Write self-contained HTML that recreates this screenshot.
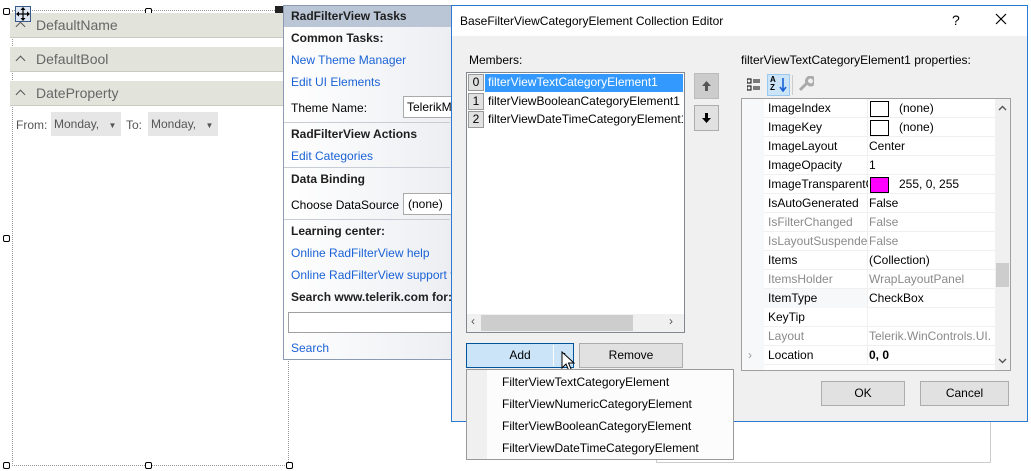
<!DOCTYPE html>
<html><head><meta charset="utf-8"><style>
*{box-sizing:border-box;margin:0;padding:0}
body{width:1031px;height:471px;overflow:hidden;background:#fff;font-family:"Liberation Sans",sans-serif;font-size:12px;color:#000;position:relative}
.a{position:absolute;white-space:nowrap}
.grp{position:absolute;left:10px;width:274px;height:25px;background:#e2e4dc;border-bottom:1px solid #c8cbc0;color:#666;font-size:14px;line-height:25px;padding-left:26px}
.grp:before{content:"";position:absolute;left:7px;top:10px;width:6px;height:6px;border-left:1.5px solid #555;border-top:1.5px solid #555;transform:rotate(45deg)}
.h{position:absolute;width:7px;height:7px;border:1px solid #000;background:#fff;border-radius:2px}
.lnk{color:#1a62d6}
.b{font-weight:bold;color:#1e1e1e}
.sep{position:absolute;left:284px;width:166px;border-top:1px solid #c8ccd4}
.row{position:absolute;left:764px;width:231px;height:19px;border-bottom:1px solid #f0f0f0;line-height:19px}
.row span{position:absolute}
.row .n{left:4px}.row .v{left:105px}
.row .c{position:absolute;left:0;width:104px;height:19px;border-right:1px solid #f0f0f0}
.g{color:#8a8a8a}
.btn{position:absolute;background:#e1e1e1;border:1px solid #adadad;text-align:center;line-height:23px}
.mi{position:absolute;left:502px}
</style></head><body>
<!-- designer -->
<div class="a" style="left:12px;top:10px;width:277px;height:456px;border:1px dotted #999"></div>
<div class="h" style="left:3px;top:8px"></div><div class="h" style="left:145px;top:8px"></div>
<div class="h" style="left:3px;top:235px"></div>
<div class="h" style="left:3px;top:462px"></div><div class="h" style="left:145px;top:462px"></div><div class="h" style="left:286px;top:462px"></div>
<div class="a" style="left:275px;top:6px;width:8px;height:8px;background:#222"></div>
<div class="grp" style="top:13px">DefaultName</div>
<div class="grp" style="top:47px">DefaultBool</div>
<div class="grp" style="top:81px">DateProperty</div>
<svg class="a" style="left:15px;top:6px" width="16" height="16" viewBox="0 0 16 16"><rect x="0.5" y="0.5" width="15" height="15" fill="#dde6f2" stroke="#3a5a8a"/><path d="M8 2V14M2 8H14" stroke="#000" stroke-width="1.2"/><path d="M8 1L5.5 4H10.5ZM8 15L5.5 12H10.5ZM1 8L4 5.5V10.5ZM15 8L12 5.5V10.5Z" fill="#000"/></svg>
<div class="a" style="left:16px;top:118px;color:#555;font-size:12px">From:</div>
<div class="a" style="left:51px;top:112px;width:70px;height:24px;background:#e6e6e6;color:#555;line-height:24px;padding-left:3px">Monday, <span style="font-size:8px;margin-left:6px">▼</span></div>
<div class="a" style="left:126px;top:118px;color:#555">To:</div>
<div class="a" style="left:148px;top:112px;width:70px;height:24px;background:#e6e6e6;color:#555;line-height:24px;padding-left:3px">Monday, <span style="font-size:8px;margin-left:6px">▼</span></div>
<!-- tasks panel -->
<div class="a" style="left:283px;top:5px;width:170px;height:355px;border:1px solid #8a9ab0;background:linear-gradient(90deg,#fff,#eceef2)"></div>
<div class="a b" style="left:284px;top:6px;width:167px;height:21px;background:#bac6d6;padding-left:7px;line-height:21px">RadFilterView Tasks</div>
<div class="a b" style="left:291px;top:31px">Common Tasks:</div>
<div class="a lnk" style="left:291px;top:53px">New Theme Manager</div>
<div class="a lnk" style="left:291px;top:75px">Edit UI Elements</div>
<div class="a" style="left:291px;top:101px">Theme Name:</div>
<div class="a" style="left:403px;top:96px;width:50px;height:22px;border:1px solid #aaa;background:#fff;padding:3px 3px">TelerikM</div>
<div class="sep" style="top:122px"></div>
<div class="a b" style="left:291px;top:127px">RadFilterView Actions</div>
<div class="a lnk" style="left:291px;top:149px">Edit Categories</div>
<div class="sep" style="top:167px"></div>
<div class="a b" style="left:291px;top:172px">Data Binding</div>
<div class="a" style="left:291px;top:198px">Choose DataSource</div>
<div class="a" style="left:403px;top:193px;width:50px;height:22px;border:1px solid #aaa;background:#fff;padding:3px 4px">(none)</div>
<div class="sep" style="top:219px"></div>
<div class="a b" style="left:291px;top:224px">Learning center:</div>
<div class="a lnk" style="left:291px;top:246px">Online RadFilterView help</div>
<div class="a lnk" style="left:291px;top:268px">Online RadFilterView support f</div>
<div class="a b" style="left:291px;top:290px">Search www.telerik.com for:</div>
<div class="a" style="left:288px;top:312px;width:165px;height:21px;border:1px solid #a0a0a0;background:#fff"></div>
<div class="a lnk" style="left:291px;top:341px">Search</div>
<!-- behind panel -->
<div class="a" style="left:656px;top:420px;width:335px;height:43px;border:1px solid #ccc;border-top:none;background:#fff"></div>
<!-- dialog -->
<div class="a" style="left:451px;top:5px;width:577px;height:417px;border:1px solid #2b79d0;background:#f0f0f0"></div>
<div class="a" style="left:452px;top:6px;width:575px;height:30px;background:#fff"></div>
<div class="a" style="left:460px;top:14px">BaseFilterViewCategoryElement Collection Editor</div>
<div class="a" style="left:952px;top:12px;font-size:14px">?</div>
<svg class="a" style="left:995px;top:13px" width="12" height="12"><path d="M1 1L11 11M11 1L1 11" stroke="#000" stroke-width="1.2"/></svg>
<div class="a" style="left:469px;top:53px">Members:</div>
<div class="a" style="left:466px;top:72px;width:219px;height:261px;border:1px solid #828790;background:#fff"></div>
<div class="a" style="left:468px;top:74px;width:16px;height:17px;background:#e1e1e1;border:1px solid #999;text-align:center;line-height:15px">0</div>
<div class="a" style="left:485px;top:74px;width:198px;height:18px;background:#3399ff;color:#fff;line-height:17px;padding-left:3px">filterViewTextCategoryElement1</div>
<div class="a" style="left:468px;top:93px;width:16px;height:17px;background:#e1e1e1;border:1px solid #999;text-align:center;line-height:15px">1</div>
<div class="a" style="left:488px;top:93px;line-height:17px">filterViewBooleanCategoryElement1</div>
<div class="a" style="left:468px;top:111px;width:16px;height:17px;background:#e1e1e1;border:1px solid #999;text-align:center;line-height:15px">2</div>
<div class="a" style="left:488px;top:111px;line-height:17px;width:195px;overflow:hidden">filterViewDateTimeCategoryElement1</div>
<div class="a" style="left:467px;top:314px;width:217px;height:18px;background:#f0f0f0"></div>
<div class="a" style="left:481px;top:315px;width:152px;height:16px;background:#cdcdcd"></div>
<div class="a" style="left:471px;top:314px;color:#555">‹</div><div class="a" style="left:669px;top:314px;color:#555">›</div>
<div class="a" style="left:694px;top:73px;width:25px;height:26px;background:#ccc;border:1px solid #bbb"></div>
<svg class="a" style="left:701px;top:81px" width="11" height="10"><path d="M5.5 0L10 5H7V10H4V5H1Z" fill="#555"/></svg>
<div class="a" style="left:694px;top:105px;width:25px;height:26px;background:#e1e1e1;border:1px solid #adadad"></div>
<svg class="a" style="left:701px;top:113px" width="11" height="10"><path d="M5.5 10L10 5H7V0H4V5H1Z" fill="#000"/></svg>
<div class="btn" style="left:466px;top:343px;width:108px;height:25px;background:#cce4f7;border-color:#005499">Add<span style="position:absolute;left:86px;top:1px;width:1px;height:21px;background:#fff"></span><span style="position:absolute;left:93px;font-size:7px">▼</span></div>
<div class="btn" style="left:579px;top:343px;width:104px;height:25px">Remove</div>
<svg class="a" style="left:561px;top:351px" width="14" height="22"><path d="M1 1V17L5 13L8 20L10.5 19L7.5 12H13Z" fill="#fff" stroke="#000" stroke-width="1"/></svg>
<div class="a" style="left:466px;top:369px;width:268px;height:91px;border:1px solid #999;background:#fcfcfc"></div>
<div class="a" style="left:467px;top:370px;width:20px;height:89px;background:#f0f0f0"></div>
<div class="mi a" style="top:375px">FilterViewTextCategoryElement</div>
<div class="mi a" style="top:397px">FilterViewNumericCategoryElement</div>
<div class="mi a" style="top:419px">FilterViewBooleanCategoryElement</div>
<div class="mi a" style="top:441px">FilterViewDateTimeCategoryElement</div>
<div class="a" style="left:741px;top:53px">filterViewTextCategoryElement1 properties:</div>
<svg class="a" style="left:747px;top:78px" width="14" height="14"><path d="M0 1h4v4H0zM0 8h4v4H0z" fill="none" stroke="#000"/><path d="M6 2h7M6 4h7M6 9h7M6 11h7" stroke="#000"/></svg>
<div class="a" style="left:767px;top:74px;width:23px;height:22px;background:#cce4f7;border:1px solid #99c9ef"></div>
<div class="a" style="left:770px;top:76px;font-size:8px;line-height:8px;font-weight:bold">A<br>Z</div>
<svg class="a" style="left:779px;top:78px" width="8" height="14"><path d="M4 0V12M1 9L4 13L7 9" stroke="#1a62d6" stroke-width="1.6" fill="none"/></svg>
<div class="a" style="left:792px;top:75px;width:1px;height:20px;background:#ccc"></div>
<svg class="a" style="left:798px;top:76px" width="16" height="16"><path d="M2 14L9 7M9 7A4 4 0 1 1 12 9Z" stroke="#aaa" stroke-width="3" fill="none"/></svg>
<div class="a" style="left:741px;top:98px;width:270px;height:273px;border:1px solid #a0a0a0;background:#f7f8fa"></div>
<div class="a" style="left:764px;top:99px;width:231px;height:271px;background:#fff"></div>
<div class="row" style="top:99px"><div class="c"></div><span class="n">ImageIndex</span><span class="v" style="left:106px"><i style="display:inline-block;width:19px;height:16px;border:1px solid #000;vertical-align:middle"></i>&nbsp;&nbsp;&nbsp;(none)</span></div>
<div class="row" style="top:118px"><div class="c"></div><span class="n">ImageKey</span><span class="v" style="left:106px"><i style="display:inline-block;width:19px;height:16px;border:1px solid #000;vertical-align:middle"></i>&nbsp;&nbsp;&nbsp;(none)</span></div>
<div class="row" style="top:137px"><div class="c"></div><span class="n">ImageLayout</span><span class="v">Center</span></div>
<div class="row" style="top:156px"><div class="c"></div><span class="n">ImageOpacity</span><span class="v">1</span></div>
<div class="row" style="top:175px"><div class="c"></div><span class="n" style="width:100px;overflow:hidden">ImageTransparentColor</span><span class="v" style="left:106px"><i style="display:inline-block;width:19px;height:16px;border:1px solid #000;background:#f0f;vertical-align:middle"></i>&nbsp;&nbsp;&nbsp;255, 0, 255</span></div>
<div class="row" style="top:194px"><div class="c"></div><span class="n">IsAutoGenerated</span><span class="v">False</span></div>
<div class="row g" style="top:213px"><div class="c"></div><span class="n">IsFilterChanged</span><span class="v">False</span></div>
<div class="row g" style="top:232px"><div class="c"></div><span class="n" style="width:100px;overflow:hidden">IsLayoutSuspended</span><span class="v">False</span></div>
<div class="row" style="top:251px"><div class="c"></div><span class="n">Items</span><span class="v">(Collection)</span></div>
<div class="row g" style="top:270px"><div class="c"></div><span class="n">ItemsHolder</span><span class="v">WrapLayoutPanel</span></div>
<div class="row" style="top:289px"><div class="c" style="background:#f7f8fa"></div><span class="n">ItemType</span><span class="v">CheckBox</span></div>
<div class="row" style="top:308px"><div class="c"></div><span class="n">KeyTip</span></div>
<div class="row g" style="top:327px"><div class="c"></div><span class="n">Layout</span><span class="v" style="width:125px;overflow:hidden">Telerik.WinControls.UI.</span></div>
<div class="row" style="top:346px;font-weight:bold"><div class="c"></div><span class="n" style="font-weight:normal">Location</span><span class="v">0, 0</span></div>
<div class="a" style="left:748px;top:348px;color:#999">›</div>
<div class="a" style="left:995px;top:99px;width:15px;height:271px;background:#f0f0f0"></div>
<div class="a" style="left:996px;top:263px;width:13px;height:24px;background:#cdcdcd"></div>
<svg class="a" style="left:998px;top:105px" width="9" height="6"><path d="M1 5L4.5 1.5L8 5" stroke="#555" stroke-width="1.4" fill="none"/></svg>
<svg class="a" style="left:998px;top:358px" width="9" height="6"><path d="M1 1L4.5 4.5L8 1" stroke="#555" stroke-width="1.4" fill="none"/></svg>
<div class="btn" style="left:821px;top:381px;width:84px;height:25px">OK</div>
<div class="btn" style="left:920px;top:381px;width:89px;height:25px">Cancel</div>
</body></html>
